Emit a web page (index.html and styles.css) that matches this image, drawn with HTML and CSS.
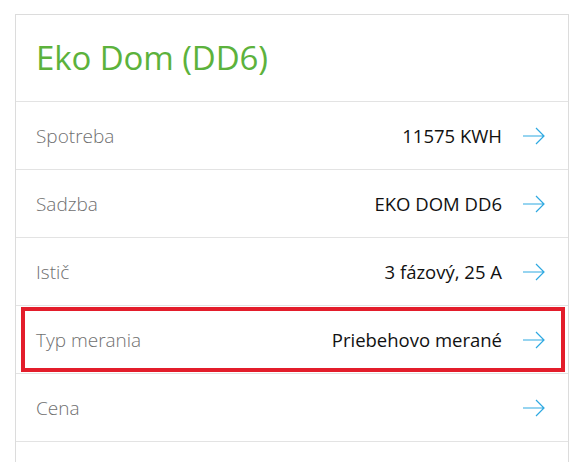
FILE: index.html
```html
<!DOCTYPE html>
<html lang="sk">
<head>
  <meta charset="UTF-8" />
  <meta name="viewport" content="width=device-width, initial-scale=1.0"/>
  <title>Eko Dom (DD6)</title>
  <link rel="stylesheet" href="styles.css">
</head>

<body>
  <div class="card">
    <div class="card-header">
      <h1>Eko Dom (DD6)</h1>
    </div>

    <ul class="detail-list">
      <li class="detail-item">
        <span class="label">Spotreba</span>
        <span class="value">11575 KWH</span>
        <svg class="arrow" viewBox="0 0 22 18"><path d="M0 9 H21 M13 1 L21 9 L13 17" /></svg>
      </li>
      <li class="detail-item">
        <span class="label">Sadzba</span>
        <span class="value">EKO DOM DD6</span>
        <svg class="arrow" viewBox="0 0 22 18"><path d="M0 9 H21 M13 1 L21 9 L13 17" /></svg>
      </li>
      <li class="detail-item">
        <span class="label">Istič</span>
        <span class="value">3 fázový, 25 A</span>
        <svg class="arrow" viewBox="0 0 22 18"><path d="M0 9 H21 M13 1 L21 9 L13 17" /></svg>
      </li>
      <li class="detail-item highlighted">
        <span class="label">Typ merania</span>
        <span class="value">Priebehovo merané</span>
        <svg class="arrow" viewBox="0 0 22 18"><path d="M0 9 H21 M13 1 L21 9 L13 17" /></svg>
      </li>
      <li class="detail-item">
        <span class="label">Cena</span>
        <span class="value"></span>
        <svg class="arrow" viewBox="0 0 22 18"><path d="M0 9 H21 M13 1 L21 9 L13 17" /></svg>
      </li>
      <li class="detail-item"></li>
    </ul>
  </div>
</body>
</html>
```

FILE: styles.css
```css
* {
  box-sizing: border-box;
}
html, body {
  overflow: hidden;
}
body {
  margin: 0;
  padding: 14px 13px 0 15px;
  background: #fff;
  font-family: 'Open Sans', sans-serif;
}
.card {
  border: 1px solid #dcdcdc;
  border-bottom: none;
  background: #fff;
}
.card-header {
  height: 87px;
  border-bottom: 1px solid #e3e3e3;
  display: flex;
  align-items: center;
  padding: 0 20px;
}
.card-header h1 {
  margin: 0 0 2px;
  font-size: 33px;
  font-weight: 400;
  color: #5cb23c;
  letter-spacing: -0.1px;
}
.detail-list {
  list-style: none;
  margin: 0;
  padding: 0;
}
.detail-item {
  position: relative;
  height: 68px;
  border-bottom: 1px solid #e3e3e3;
  display: flex;
  align-items: center;
  padding: 0 23px 0 20px;
}
.detail-item:last-child {
  height: 20px;
  border-bottom: none;
}
.label {
  flex: 1;
  font-size: 19px;
  font-weight: 300;
  color: #6f6f6f;
}
.value {
  font-size: 18.5px;
  color: #111;
  margin-right: 21px;
}
.arrow {
  width: 22px;
  height: 18px;
  fill: none;
  stroke: #2ea9e1;
  stroke-width: 1.2;
}

/* annotation frame round the selected row */
.highlighted::after {
  content: "";
  position: absolute;
  top: 1px;
  bottom: 1px;
  left: 5px;
  right: 3px;
  border: 4px solid #e31d2b;
}
```
